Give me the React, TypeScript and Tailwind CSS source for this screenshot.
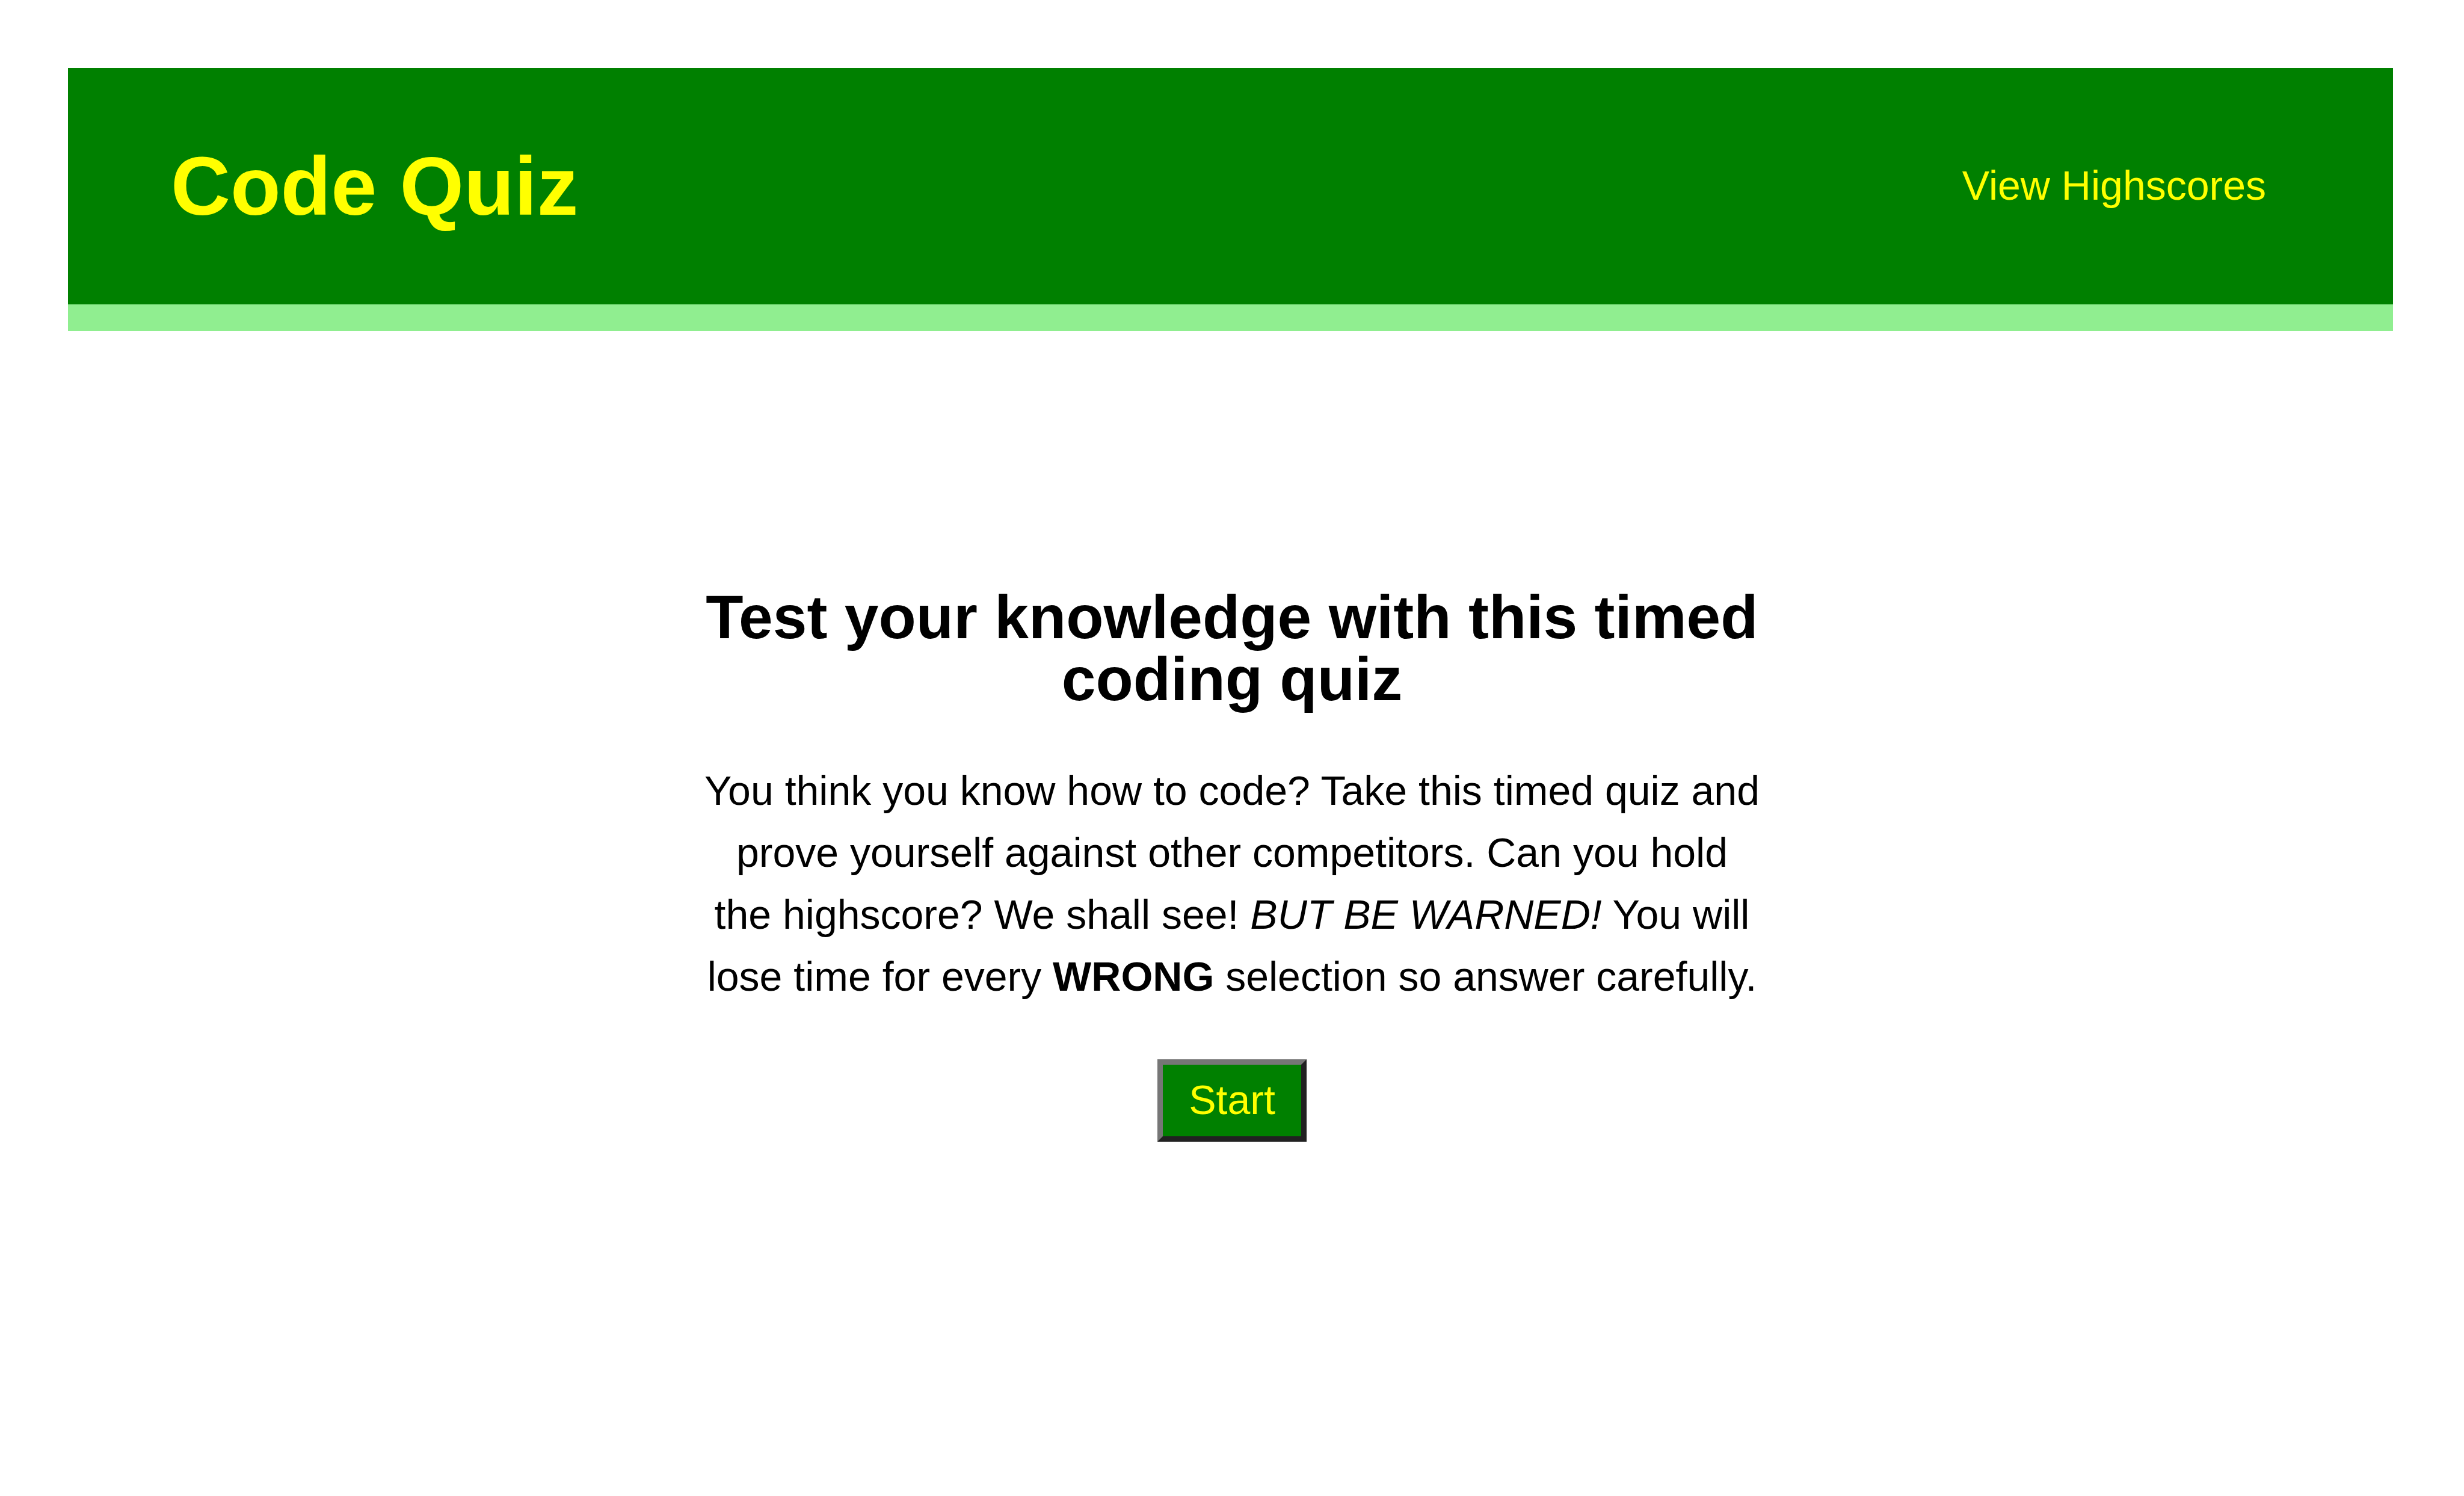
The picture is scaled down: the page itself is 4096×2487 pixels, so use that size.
export default function App() {
  return (
    <div className="min-h-screen bg-white pt-[113px] font-['Liberation_Sans',Arial,sans-serif] text-[68px] text-black">
      <header className="mr-[118px] ml-[113px] flex items-center justify-between border-b-[44px] border-[#90ee90] bg-[#008000] py-[117px] pr-[211px] pl-[171px] text-[#ffff00]">
        <h1 className="text-[137px] leading-[159px] font-bold">Code Quiz</h1>
        <a href="#highscores" className="pb-1">
          View Highscores
        </a>
      </header>
      <main className="mx-auto flex max-w-[1756px] flex-col items-center pt-[425px] text-center leading-[103px]">
        <h2 className="text-[102px] leading-[103px] font-bold">Test your knowledge with this timed coding quiz</h2>
        <p className="mt-[82px]">
          You think you know how to code? Take this timed quiz and prove yourself against other competitors. Can you
          hold the highscore? We shall see! <em>BUT BE WARNED!</em> You will lose time for every{" "}
          <strong className="font-bold">WRONG</strong> selection so answer carefully.
        </p>
        <button
          type="button"
          className="mt-[86px] border-[9px] border-t-[#767676] border-r-[#212121] border-b-[#212121] border-l-[#767676] bg-[#008000] px-[43px] pt-[19px] pb-[22px] leading-[78px] text-[#ffff00]"
        >
          Start
        </button>
      </main>
    </div>
  );
}
